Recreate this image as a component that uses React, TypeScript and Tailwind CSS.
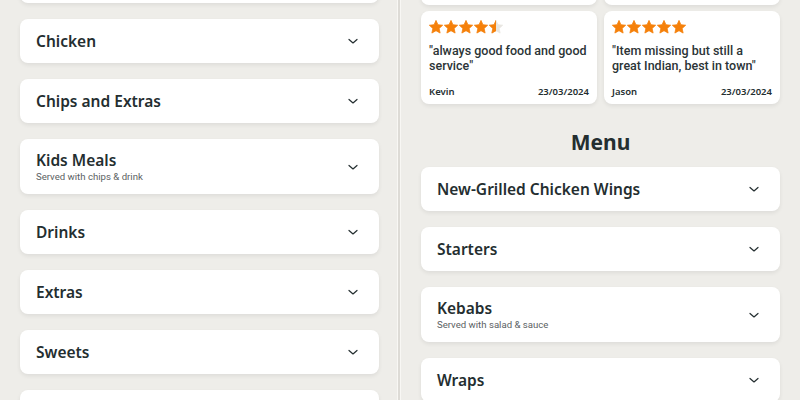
import React from "react";

const font = { fontFamily: "'Noto Sans', sans-serif" };
const roboto = { fontFamily: "Roboto, 'Noto Sans', sans-serif" };

function Chevron() {
  return (
    <svg width="12" height="12" viewBox="0 0 12 12" className="shrink-0 text-[#242e30]">
      <polyline points="2,4.5 6,8 10,4.5" fill="none" stroke="currentColor" strokeWidth="1.2" strokeLinecap="round" strokeLinejoin="round" />
    </svg>
  );
}

function MenuCard({ title, sub, className = "" }: { title: string; sub?: string; className?: string }) {
  return (
    <div
      className={`flex w-full items-center justify-between rounded-lg bg-white pl-4 pr-5 shadow-[0_2px_4px_rgba(0,0,0,0.07)] ${
        sub ? "py-[11px]" : "py-3"
      } ${className}`}
    >
      <div className="flex flex-col">
        <span className="text-[15.5px] leading-5 font-semibold text-[#242e30]">{title}</span>
        {sub && (
          <span style={roboto} className="text-[9.6px] leading-[13px] text-[#5b6163]">
            {sub}
          </span>
        )}
      </div>
      <Chevron />
    </div>
  );
}

const STAR = "M7 0.4L8.94 4.73L13.66 5.24L10.14 8.42L11.11 13.06L7 10.7L2.89 13.06L3.86 8.42L0.34 5.24L5.06 4.73Z";

function Star({ half = false, id }: { half?: boolean; id: string }) {
  return (
    <svg width="14" height="14" viewBox="0 0 14 14">
      {half && (
        <defs>
          <clipPath id={id}>
            <rect x="0" y="0" width="7" height="14" />
          </clipPath>
        </defs>
      )}
      {half ? (
        <>
          <path d={STAR} fill="#e8e6e1" stroke="#e8e6e1" strokeWidth="0.8" strokeLinejoin="round" />
          <path d={STAR} fill="#f5800a" stroke="#f5800a" strokeWidth="0.8" strokeLinejoin="round" clipPath={`url(#${id})`} />
        </>
      ) : (
        <path d={STAR} fill="#f5800a" stroke="#f5800a" strokeWidth="0.8" strokeLinejoin="round" />
      )}
    </svg>
  );
}

function ReviewCard({
  rating,
  lines,
  name,
  date,
}: {
  rating: number;
  lines: string[];
  name: string;
  date: string;
}) {
  return (
    <div className="flex h-[93px] flex-col rounded-lg bg-white pt-[9px] pr-2 pb-[5px] pl-2 shadow-[0_2px_4px_rgba(0,0,0,0.07)]">
      <div className="flex gap-px">
        {[0, 1, 2, 3, 4].map((i) => (
          <Star key={i} id={`h-${name}-${i}`} half={i + 0.5 === rating} />
        ))}
      </div>
      <p style={roboto} className="mt-[9px] whitespace-nowrap text-[12.5px] leading-[15px] font-medium text-[#2b3436]">
        {lines.map((l, i) => (
          <React.Fragment key={i}>
            {i > 0 && <br />}
            {l}
          </React.Fragment>
        ))}
      </p>
      <div className="mt-auto flex items-center justify-between text-[9.5px] font-semibold text-[#242e30]">
        <span>{name}</span>
        <span>{date}</span>
      </div>
    </div>
  );
}

export default function App() {
  return (
    <div style={font} className="flex h-[400px] w-[800px] overflow-hidden bg-[#eeede9]">
      <div className="flex w-[397px] shrink-0 flex-col gap-4 pl-5 pr-[18px]">
        <MenuCard title="Curries" className="-mt-[41px]" />
        <MenuCard title="Chicken" />
        <MenuCard title="Chips and Extras" />
        <MenuCard title="Kids Meals" sub="Served with chips & drink" />
        <MenuCard title="Drinks" />
        <MenuCard title="Extras" />
        <MenuCard title="Sweets" />
        <MenuCard title="Dips" />
      </div>
      <div className="w-px shrink-0 bg-[#f8f7f4]" />
      <div className="w-[2px] shrink-0 bg-[#dddbd6]" />
      <div className="w-px shrink-0 bg-[#f8f7f4]" />
      <div className="flex w-[399px] shrink-0 flex-col px-5">
        <div className="-mt-[88px] grid grid-cols-2 gap-[7px]">
          <ReviewCard rating={5} lines={['"Lovely food as always"']} name="Sam" date="24/03/2024" />
          <ReviewCard rating={5} lines={['"Great"']} name="Amy" date="24/03/2024" />
        </div>
        <div className="mt-[6px] grid grid-cols-2 gap-[7px]">
          <ReviewCard rating={4.5} lines={['"always good food and good', 'service"']} name="Kevin" date="23/03/2024" />
          <ReviewCard rating={5} lines={['"Item missing but still a', 'great Indian, best in town"']} name="Jason" date="23/03/2024" />
        </div>
        <h2 className="mt-[22px] text-center text-[21px] leading-8 font-bold text-[#242e30]">Menu</h2>
        <div className="mt-[9px] flex flex-col gap-4">
          <MenuCard title="New-Grilled Chicken Wings" />
          <MenuCard title="Starters" />
          <MenuCard title="Kebabs" sub="Served with salad & sauce" />
          <MenuCard title="Wraps" />
        </div>
      </div>
    </div>
  );
}
